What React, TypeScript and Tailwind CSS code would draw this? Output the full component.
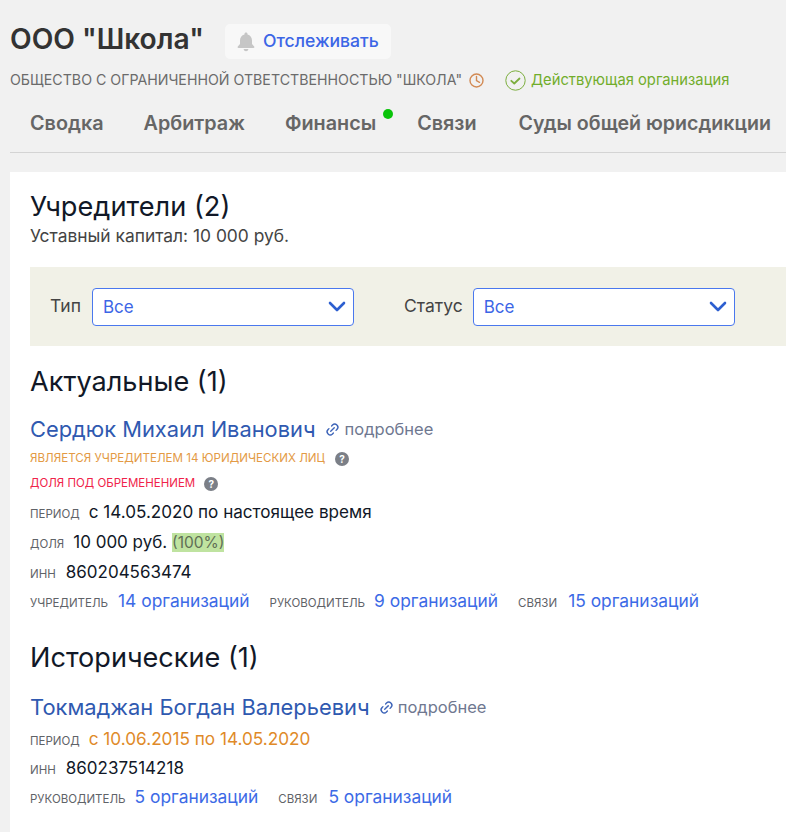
import { Link2 } from "lucide-react";

const F = "font-['Inter','Noto_Sans',sans-serif]";

function Chevron() {
  return (
    <svg width="18" height="11" viewBox="0 0 18 11" fill="none">
      <path d="M2 2l7 7 7-7" stroke="#2d5fd0" strokeWidth="2.6" strokeLinecap="round" strokeLinejoin="round" />
    </svg>
  );
}

function Select({ width }: { width: string }) {
  return (
    <div className={`${width} h-[38px] flex items-center justify-between pl-[10px] pr-[7px] bg-white border border-[#4a78ee] rounded-[4px] text-[17px] text-[#3c66e6]`}>
      <span className="pt-[3px]">Все</span>
      <Chevron />
    </div>
  );
}

function Help() {
  return (
    <span className="inline-flex w-[14px] h-[14px] rounded-full bg-[#7b7f87] text-white text-[10px] font-bold items-center justify-center leading-none">?</span>
  );
}

function More({ gap }: { gap: string }) {
  return (
    <span className={`inline-flex items-center ${gap} text-[16.500px] text-[#6f7890]`}>
      <Link2 size={15} strokeWidth={2.2} className="text-[#3d64b8] -rotate-45" />
      подробнее
    </span>
  );
}

function Label({ children }: { children: React.ReactNode }) {
  return <span className="text-[11.500px] uppercase text-[#5f6368]">{children}</span>;
}

function Org({ children }: { children: React.ReactNode }) {
  return <span className="text-[17.400px] text-[#3c6ae6]">{children}</span>;
}

function Row({ h, gap, color, size, label, children }: { h: string; gap: string; color: string; size: string; label: string; children: React.ReactNode }) {
  return (
    <div className={`${h} flex items-center ${color} ${size}`}>
      <div className={`flex items-baseline ${gap}`}>
        <Label>{label}</Label>
        <span>{children}</span>
      </div>
    </div>
  );
}

export default function App() {
  return (
    <div className={`${F} w-[786px] h-[832px] overflow-hidden bg-[#f1f1f1] pl-[10px]`}>
      <div className="h-[172px] pt-[24px]">
        <div className="flex items-center h-[35px]">
          <h1 className="text-[28.150px] font-semibold text-[#333333] leading-none mb-[4px]">ООО "Школа"</h1>
          <div className="ml-[21px] w-[166px] h-[35px] bg-[#f8f8f8] rounded-[5px] flex items-center pl-[12px] gap-[8px]">
            <svg width="18" height="20" viewBox="0 0 18 20" fill="#c6c6c6">
              <path d="M9 0.5c-0.9 0-1.5 0.6-1.5 1.4v0.6C4.6 3.2 3 5.6 3 8.4v3.7L0.8 14.6c-0.5 0.6-0.1 1.4 0.7 1.4h15c0.8 0 1.2-0.8 0.7-1.4L15 12.1V8.4c0-2.8-1.6-5.2-4.5-5.9V1.9C10.500 1.100 9.900 0.500 9 0.500z" />
              <path d="M6.600 17c0.200 1.300 1.200 2.300 2.400 2.300s2.200-1 2.400-2.300z" />
            </svg>
            <span className="text-[17.600px] font-medium text-[#3c66e6]">Отслеживать</span>
          </div>
        </div>
        <div className="flex items-center mt-[6px] h-[30px]">
          <span className="text-[14.200px] text-[#6b6b6b]">ОБЩЕСТВО С ОГРАНИЧЕННОЙ ОТВЕТСТВЕННОСТЬЮ "ШКОЛА"</span>
          <svg className="ml-[7px]" width="15" height="15" viewBox="0 0 15 15" fill="none" stroke="#d28a54" strokeWidth="1.400">
            <circle cx="7.500" cy="7.500" r="6.500" />
            <path d="M7.500 3.500v4.200l3 1.600" strokeLinecap="round" />
          </svg>
          <svg className="ml-[21px]" width="21" height="21" viewBox="0 0 21 21" fill="none" stroke="#7cae3e">
            <circle cx="10.500" cy="10.500" r="9.700" strokeWidth="1" />
            <path d="M6.300 10.800l3 2.700 5.200-5" strokeWidth="1.800" strokeLinecap="round" strokeLinejoin="round" />
          </svg>
          <span className="ml-[5px] text-[14.750px] text-[#71ad2b]">Действующая организация</span>
        </div>
        <div className="flex items-center h-[58px] pt-[1px] pl-[20px] gap-[40px] border-b border-[#d4d4d4] text-[19.800px] font-semibold text-[#666666] w-[776px] whitespace-nowrap">
          <span>Сводка</span>
          <span>Арбитраж</span>
          <span className="relative">
            Финансы
            <span className="absolute -right-[17px] top-[0px] w-[10px] h-[10px] rounded-full bg-[#0ac40a]" />
          </span>
          <span className="ml-[1px]">Связи</span>
          <span className="ml-[2px] text-[19.600px]">Суды общей юрисдикции</span>
        </div>
      </div>

      <div className="bg-white h-[660px] pl-[20px] pt-[19px]">
        <h2 className="text-[27.200px] leading-[32px] text-[#111827]">Учредители (2)</h2>
        <p className="text-[17.400px] leading-[20px] text-[#444444] mt-[3px]">Уставный капитал: 10 000 руб.</p>

        <div className="mt-[21px] h-[79px] bg-[#f1f1e7] flex items-center pl-[20px] text-[17.500px] text-[#444444]">
          <span className="mr-[11px]">Тип</span>
          <Select width="w-[262px]" />
          <span className="ml-[50px] mr-[10px]">Статус</span>
          <Select width="w-[262px]" />
        </div>

        <h2 className="mt-[20px] text-[27.100px] leading-[32px] text-[#111827]">Актуальные (1)</h2>

        <div className="mt-[15px] flex items-center gap-[9px] h-[32px]">
          <span className="text-[21.850px] text-[#2f59b0]">Сердюк Михаил Иванович</span>
          <More gap="gap-[5px]" />
        </div>
        <div className="mt-[2px] h-[24px] flex items-center gap-[10px] text-[11.600px] uppercase text-[#e39a45]">
          <span>Является учредителем 14 юридических лиц</span>
          <Help />
        </div>
        <div className="h-[26px] flex items-center gap-[9px] text-[11.500px] uppercase text-[#f0234a]">
          <span>Доля под обременением</span>
          <Help />
        </div>
        <Row h="h-[30px]" gap="gap-[9px]" color="text-[#111827]" size="text-[17.100px]" label="Период">с 14.05.2020 по настоящее время</Row>
        <Row h="h-[32px]" gap="gap-[9px]" color="text-[#111827]" size="text-[17px]" label="Доля">
          10 000 руб. <span className="bg-[#bfe3a0] text-[#5f6f55] text-[15.500px]">(100%)</span>
        </Row>
        <Row h="h-[28px]" gap="gap-[10px]" color="text-[#111827]" size="text-[17px]" label="ИНН">860204563474</Row>
        <div className="h-[30px] flex items-baseline pt-[1px]">
          <Label>Учредитель</Label>
          <span className="ml-[10px]"><Org>14 организаций</Org></span>
          <span className="ml-[20px]"><Label>Руководитель</Label></span>
          <span className="ml-[9px]"><Org>9 организаций</Org></span>
          <span className="ml-[20px]"><Label>Связи</Label></span>
          <span className="ml-[11px]"><Org>15 организаций</Org></span>
        </div>

        <h2 className="mt-[25px] text-[27.100px] leading-[32px] text-[#111827]">Исторические (1)</h2>

        <div className="mt-[17px] flex items-center gap-[9px] h-[32px]">
          <span className="text-[21.900px] text-[#2f59b0]">Токмаджан Богдан Валерьевич</span>
          <More gap="gap-[4px]" />
        </div>
        <Row h="h-[31px]" gap="gap-[9px]" color="text-[#e08a28]" size="text-[17.200px]" label="Период">с 10.06.2015 по 14.05.2020</Row>
        <Row h="h-[30px]" gap="gap-[10px]" color="text-[#111827]" size="text-[17px]" label="ИНН">860237514218</Row>
        <div className="h-[30px] flex items-baseline">
          <Label>Руководитель</Label>
          <span className="ml-[9px]"><Org>5 организаций</Org></span>
          <span className="ml-[20px]"><Label>Связи</Label></span>
          <span className="ml-[11px]"><Org>5 организаций</Org></span>
        </div>
      </div>
    </div>
  );
}
